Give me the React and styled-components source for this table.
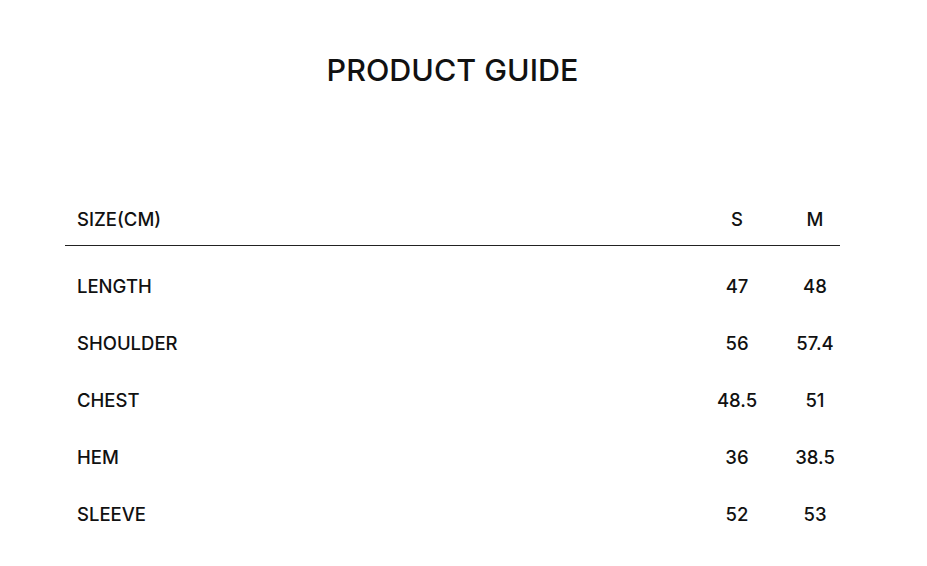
import React from "react";
import styled, { createGlobalStyle } from "styled-components";

const GlobalStyle = createGlobalStyle`
  body {
    margin: 0;
    background: #fff;
    font-family: Inter, "Liberation Sans", sans-serif;
    color: #111;
  }
`;

const sizes = ["S", "M"];

const rows = [
  { name: "LENGTH", values: ["47", "48"] },
  { name: "SHOULDER", values: ["56", "57.4"] },
  { name: "CHEST", values: ["48.5", "51"] },
  { name: "HEM", values: ["36", "38.5"] },
  { name: "SLEEVE", values: ["52", "53"] },
];

const Page = styled.div`
  width: 775px;
  padding: 50px 0 0 65px;
`;

const Title = styled.h1`
  margin: 0;
  text-align: center;
  font-size: 30.5px;
  line-height: 40px;
  font-weight: 500;
`;

const Table = styled.div`
  margin-top: 103px;
`;

const Row = styled.div`
  display: grid;
  grid-template-columns: 1fr 50px 50px;
  column-gap: 28px;
  align-items: center;
  height: ${(p) => (p.head ? "52px" : "57px")};
  border-bottom: ${(p) => (p.head ? "1px solid #222" : "none")};
  margin-bottom: ${(p) => (p.head ? "11px" : "0")};
  font-size: 18.5px;
  font-weight: 500;
`;

const Label = styled.div`
  padding-left: 12px;
  white-space: nowrap;
`;

const Cell = styled.div`
  display: flex;
  justify-content: center;
  white-space: nowrap;
`;

export default function App() {
  return (
    <Page>
      <GlobalStyle />
      <Title>PRODUCT GUIDE</Title>
      <Table>
        <Row head>
          <Label>SIZE(CM)</Label>
          {sizes.map((s) => (
            <Cell key={s}>{s}</Cell>
          ))}
        </Row>
        {rows.map((r) => (
          <Row key={r.name}>
            <Label>{r.name}</Label>
            {r.values.map((v, i) => (
              <Cell key={i}>{v}</Cell>
            ))}
          </Row>
        ))}
      </Table>
    </Page>
  );
}
